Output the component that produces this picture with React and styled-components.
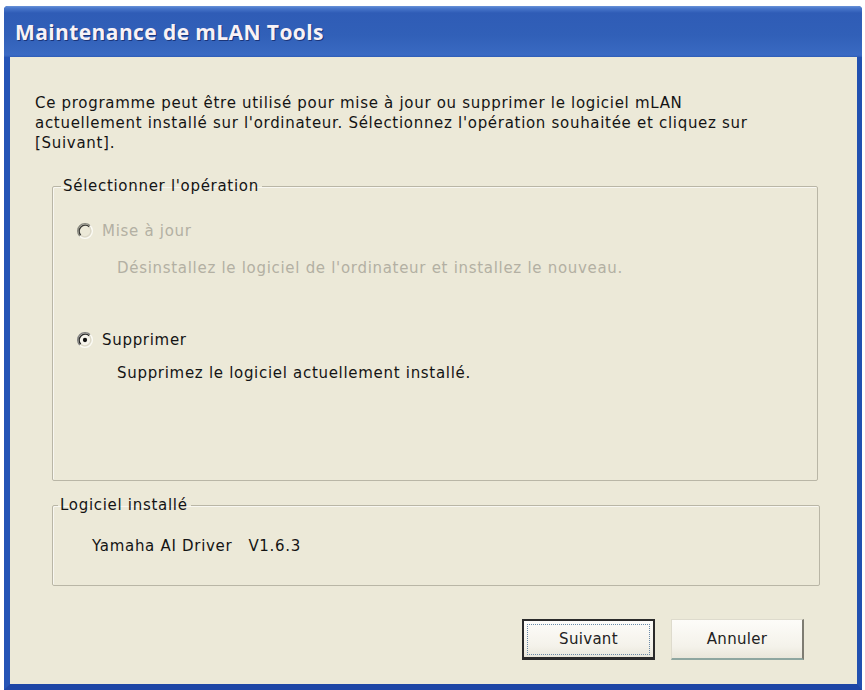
import React from "react";
import styled, { createGlobalStyle } from "styled-components";

const Global = createGlobalStyle`
  html, body { margin: 0; padding: 0; background: #ffffff; }
  body { font-family: "DejaVu Sans", Verdana, sans-serif; }
`;

const Page = styled.div`
  width: 865px;
  height: 690px;
  padding: 6px 3px 0 4px;
  box-sizing: border-box;
  display: flex;
`;

const Window = styled.div`
  flex: 1;
  display: flex;
  flex-direction: column;
  border-radius: 4px 4px 0 0;
  overflow: hidden;
  background: #2657b4;
`;

const TitleBar = styled.div`
  height: 51px;
  flex: none;
  display: flex;
  align-items: center;
  padding-left: 11px;
  background: linear-gradient(
    to bottom,
    #6a93d8 0px,
    #4a78cc 2px,
    #2f5cb6 7px,
    #3160b8 30px,
    #3868c0 45px,
    #3a6ac4 49px,
    #2d5cb6 51px
  );
`;

const Title = styled.h1`
  margin: 0;
  font-family: "Open Sans", "DejaVu Sans", sans-serif;
  font-weight: 700;
  font-size: 21px;
  letter-spacing: 0.4px;
  color: #f8f2f6;
  text-shadow: 1px 1px 0 #1a3478;
`;

const Frame = styled.div`
  flex: 1;
  display: flex;
  border-left: 6px solid #2454b6;
  border-right: 5px solid #2250b0;
  border-bottom: 6px solid #1e46a6;
`;

const Body = styled.div`
  flex: 1;
  background: #ece9d8;
  display: flex;
  flex-direction: column;
  padding: 36px 39px 0 25px;
  font-family: "DejaVu Sans", Verdana, sans-serif;
  font-size: 15px;
  letter-spacing: 0.7px;
  color: #141414;
`;

const Intro = styled.p`
  margin: 0;
  line-height: 20px;
  white-space: nowrap;
`;

const Group = styled.fieldset`
  margin: ${(p) => p.$top}px ${(p) => p.$right}px 0 17px;
  padding: 0;
  height: ${(p) => p.$h}px;
  box-sizing: border-box;
  border: 1px solid #b9b6a6;
  border-radius: 2px;
  box-shadow: inset 1px 1px 0 #f8f7f1;
  display: flex;
  flex-direction: column;
  min-width: 0;
`;

const Legend = styled.legend`
  margin-left: ${(p) => p.$ml}px;
  padding: 0 3px 0 2px;
  line-height: 20px;
  color: #141414;
`;

const Option = styled.div`
  display: flex;
  flex-direction: column;
  margin-top: ${(p) => p.$top}px;
  padding-left: 24px;
  color: ${(p) => (p.$disabled ? "#b3b0a3" : "#141414")};
`;

const RadioRow = styled.label`
  display: flex;
  align-items: center;
  gap: 9px;
  height: 20px;
  line-height: 20px;
`;

const Desc = styled.div`
  margin-top: ${(p) => p.$top}px;
  padding-left: 40px;
  line-height: 20px;
`;

const Info = styled.div`
  margin-top: 21px;
  padding-left: 39px;
  line-height: 20px;
  display: flex;
  gap: 16px;
`;

const Buttons = styled.div`
  display: flex;
  justify-content: flex-end;
  gap: 16px;
  margin-top: 33px;
  padding-right: 14px;
`;

const Button = styled.button`
  width: 133px;
  height: 41px;
  box-sizing: border-box;
  font-family: "DejaVu Sans", Verdana, sans-serif;
  font-size: 15px;
  letter-spacing: 0.3px;
  color: #222;
  background: linear-gradient(to bottom, #fdfcf9 0%, #f4f2ea 70%, #e9e6da 100%);
  border: ${(p) => (p.$default ? "2px solid #2a2a2a" : "1px solid #dedbcd")};
  border-right: ${(p) => (p.$default ? "2px solid #2a2a2a" : "2px solid #7e7c72")};
  border-bottom: ${(p) => (p.$default ? "3px solid #2a2a2a" : "2px solid #8ea6a0")};
  outline: ${(p) => (p.$default ? "1px dotted #6a8aa8" : "none")};
  outline-offset: -6px;
  padding: 0;
  cursor: default;
`;

function Radio({ checked, disabled }) {
  const fill = disabled ? "#ece9d8" : "#f6f4ec";
  return (
    <svg width="16" height="16" viewBox="0 0 12 12">
      <circle cx="6" cy="6" r="5" fill={fill} />
      <path d="M2.11 9.89 A5.5 5.5 0 0 1 9.89 2.11" fill="none" stroke={disabled ? "#8a8a80" : "#808080"} strokeWidth="1" />
      <path d="M9.89 2.11 A5.5 5.5 0 0 1 2.11 9.89" fill="none" stroke="#fbfbf6" strokeWidth="1" />
      <path d="M2.82 9.18 A4.5 4.5 0 0 1 9.18 2.82" fill="none" stroke={disabled ? "#3a3a36" : "#2a2a2a"} strokeWidth="1" />
      <path d="M9.18 2.82 A4.5 4.5 0 0 1 2.82 9.18" fill="none" stroke="#dcd8c8" strokeWidth="1" />
      {checked && <circle cx="6" cy="6" r="1.6" fill="#111" />}
    </svg>
  );
}

export default function App() {
  return (
    <>
      <Global />
      <Page>
        <Window>
          <TitleBar>
            <Title>Maintenance de mLAN Tools</Title>
          </TitleBar>
          <Frame>
            <Body>
              <Intro>
                Ce programme peut être utilisé pour mise à jour ou supprimer le logiciel mLAN
                <br />
                actuellement installé sur l'ordinateur. Sélectionnez l'opération souhaitée et cliquez sur
                <br />
                [Suivant].
              </Intro>
              <Group $top={23} $right={0} $h={305}>
                <Legend $ml={8}>Sélectionner l'opération</Legend>
                <Option $top={25} $disabled>
                  <RadioRow>
                    <Radio disabled />
                    Mise à jour
                  </RadioRow>
                  <Desc $top={17}>Désinstallez le logiciel de l'ordinateur et installez le nouveau.</Desc>
                </Option>
                <Option $top={52}>
                  <RadioRow>
                    <Radio checked />
                    Supprimer
                  </RadioRow>
                  <Desc $top={13}>Supprimez le logiciel actuellement installé.</Desc>
                </Option>
              </Group>
              <Group $top={14} $right={-2} $h={91}>
                <Legend $ml={5}>Logiciel installé</Legend>
                <Info>
                  <span>Yamaha AI Driver</span>
                  <span>V1.6.3</span>
                </Info>
              </Group>
              <Buttons>
                <Button $default>Suivant</Button>
                <Button>Annuler</Button>
              </Buttons>
            </Body>
          </Frame>
        </Window>
      </Page>
    </>
  );
}
